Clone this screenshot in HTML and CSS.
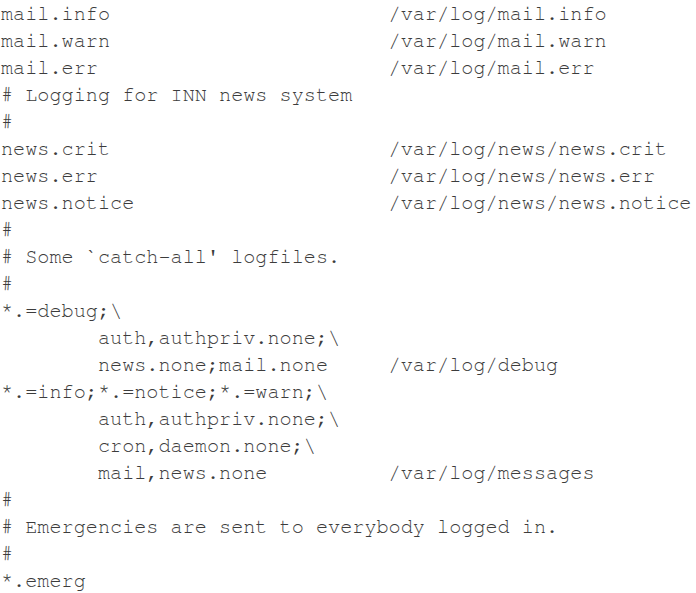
FILE: index.html
```html
<!DOCTYPE html>
<html>
<head>
<meta charset="utf-8">
<link rel="stylesheet" href="styles.css">
</head>
<body>
<pre class="listing">mail.info                       /var/log/mail.info
mail.warn                       /var/log/mail.warn
mail.err                        /var/log/mail.err
# Logging for INN news system
#
news.crit                       /var/log/news/news.crit
news.err                        /var/log/news/news.err
news.notice                     /var/log/news/news.notice
#
# Some `catch-all' logfiles.
#
*.=debug;\
        auth,authpriv.none;\
        news.none;mail.none     /var/log/debug
*.=info;*.=notice;*.=warn;\
        auth,authpriv.none;\
        cron,daemon.none;\
        mail,news.none          /var/log/messages
#
# Emergencies are sent to everybody logged in.
#
*.emerg</pre>
</body>
</html>
```

FILE: styles.css
```css
html, body {
  margin: 0;
  padding: 0;
  background: #ffffff;
}

.listing {
  margin: 0;
  padding: 1px 0 0 1px;
  font-family: "Nimbus Mono PS", "Nimbus Mono L", "FreeMono", "Courier", "Liberation Mono", monospace;
  font-size: 20.2px;
  line-height: 27px;
  color: #3c3c3c;
  white-space: pre;
}
```
